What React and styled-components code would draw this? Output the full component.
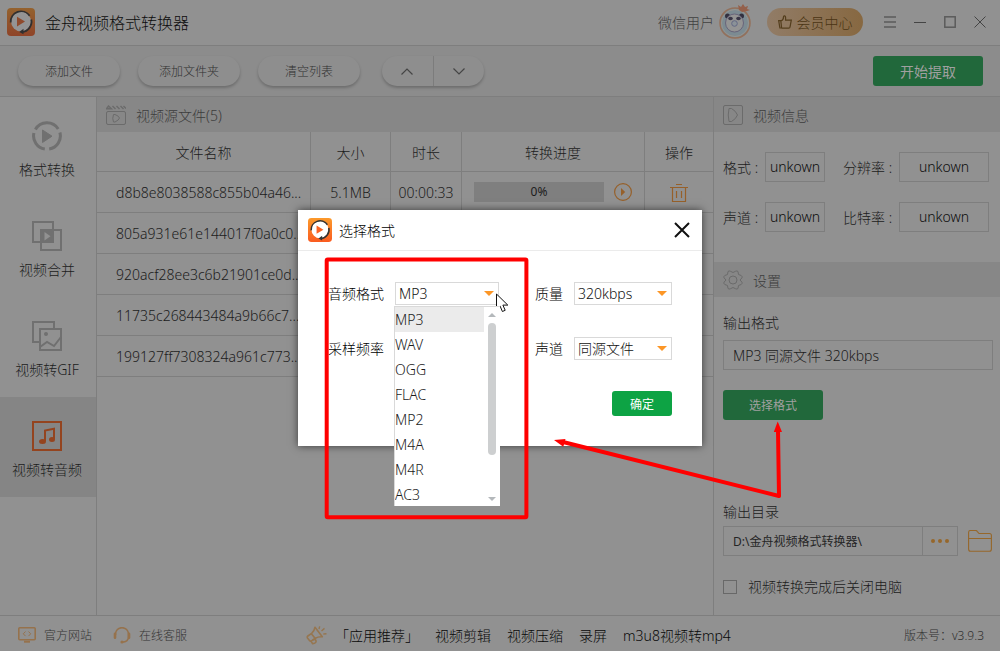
import React, { useState } from "react";
import styled, { createGlobalStyle } from "styled-components";

const GlobalStyle = createGlobalStyle`
  * {
    box-sizing: border-box;
  }

  body {
    margin: 0;
    background: #919191;
  }

  body, button, input, select {
    font-family: "Noto Sans", "Noto Sans CJK SC", sans-serif;
    font-size: 14px;
    font-weight: 300;
  }

  button {
    padding: 0;
    border: 0;
    background: none;
    color: inherit;
  }

  svg {
    display: block;
    flex: none;
  }
`;

const files = [
  { name: "d8b8e8038588c855b04a46...", size: "5.1MB", time: "00:00:33", progress: "0%" },
  { name: "805a931e61e144017f0a0c0..." },
  { name: "920acf28ee3c6b21901ce0d..." },
  { name: "11735c268443484a9b66c7..." },
  { name: "199127ff7308324a961c773..." },
];

const formats = ["MP3", "WAV", "OGG", "FLAC", "MP2", "M4A", "M4R", "AC3"];

const Logo = ({ size, dim }) => (
  <svg width={size} height={size} viewBox="0 0 28 28">
    <defs>
      <linearGradient id={dim ? "logoDim" : "logo"} x1="0" y1="0" x2="0" y2="1">
        <stop offset="0" stopColor={dim ? "#94622e" : "#fc9a2b"} />
        <stop offset="1" stopColor={dim ? "#8f4428" : "#fa5b20"} />
      </linearGradient>
    </defs>
    <rect width="28" height="28" rx="4" fill={`url(#${dim ? "logoDim" : "logo"})`} />
    <circle cx="14" cy="13.500" r="10" fill={dim ? "#949494" : "#fff"} />
    <path
      d="M3.700 14.500A10.400 10.400 0 0 1 22.600 7.800M24.300 11.500A10.400 10.400 0 0 1 15 24"
      fill="none"
      stroke={dim ? "#303030" : "#333"}
      strokeWidth="1.800"
    />
    <path d="M16.500 20.800v5.400l-4.300-2.300z" fill={dim ? "#303030" : "#333"} />
    <path d="M10 8.800v9.600l8-4.800z" fill={dim ? "#8f4a2c" : "#fb6322"} />
  </svg>
);

const Panda = () => (
  <svg width="34" height="36" viewBox="0 0 34 36">
    <circle cx="16" cy="19" r="15" fill="#7c8b92" stroke="#94705a" strokeWidth="1.500" />
    <circle cx="16" cy="19" r="13.500" fill="none" stroke="#96948f" />
    <circle cx="8.500" cy="12" r="2.500" fill="#32303f" />
    <circle cx="22.500" cy="12" r="2.500" fill="#32303f" />
    <circle cx="15.500" cy="19" r="9" fill="#949494" stroke="#68647a" />
    <ellipse cx="11.500" cy="14.500" rx="2.300" ry="1.800" fill="#393647" />
    <ellipse cx="19.500" cy="14.500" rx="2.300" ry="1.800" fill="#393647" />
    <circle cx="15.500" cy="19.500" r="2.800" fill="#8b9298" stroke="#636884" />
    <path d="M19 1l3 2 2-3 2 3 3-1-1 3 3 1-3 1-5 1-3-2z" fill="#94604b" />
  </svg>
);

const ThumbIcon = () => (
  <svg width="14" height="14" viewBox="0 0 14 14" fill="none" stroke="#543e1d" strokeWidth="1.200">
    <path d="M.7 5.700h2.100l.8 7.300H1.900zM3.300 5.700c1.600-.6 2.200-2 2.300-4.100.1-1.300 2-1 2 .8v2.800h5.700L12 12.200q-.2.900-1.200.9H3.600" />
  </svg>
);

const ConvertIcon = () => (
  <svg width="30" height="30" viewBox="0 0 30 30">
    <g fill="none" stroke="#707070" strokeWidth="3">
      <path d="M3.400 8.500A13.300 13.300 0 0 1 26.200 8" />
      <path d="M27.900 11.500A13.300 13.300 0 0 1 17.200 28.100" />
      <path d="M12.800 28.100A13.300 13.300 0 0 1 1.900 12" />
    </g>
    <path d="M10.500 9v12.500L20 15.200z" fill="#707070" stroke="#707070" strokeLinejoin="round" />
  </svg>
);

const MergeIcon = () => (
  <svg width="30" height="30" viewBox="0 0 30 30">
    <g fill="none" stroke="#707070" strokeWidth="2">
      <rect x="1" y="1" width="20" height="20" />
      <rect x="9" y="9" width="20" height="20" />
    </g>
    <rect x="9" y="9" width="12" height="12" fill="#707070" />
    <path d="M12.500 11v8.500l6-4.250z" fill="#919191" />
  </svg>
);

const GifIcon = () => (
  <svg width="30" height="30" viewBox="0 0 30 30" fill="none" stroke="#707070" strokeWidth="2">
    <path d="M7 21H1V1h21v6" />
    <rect x="8" y="8" width="21" height="21" />
    <circle cx="14" cy="13" r="2" fill="#707070" stroke="none" />
    <path d="M8 26l7-5 7 4 7-9" />
  </svg>
);

const MusicIcon = () => (
  <svg width="30" height="30" viewBox="0 0 30 30">
    <rect x="1" y="1" width="28" height="28" fill="none" stroke="#94441f" strokeWidth="2" />
    <path d="M13 20V9.500l9-1.700V18" fill="none" stroke="#94441f" strokeWidth="2" />
    <ellipse cx="10.500" cy="20.500" rx="3.500" ry="2.500" fill="#94441f" />
    <ellipse cx="20" cy="18.500" rx="3" ry="2.500" fill="#94441f" />
  </svg>
);

const ClapperIcon = () => (
  <svg width="20" height="20" viewBox="0 0 20 20" fill="none" stroke="#6b6b6b">
    <rect x=".5" y="6.500" width="19" height="13" rx="1.500" />
    <path d="M.5 3.800L2.500 1l3 2.800zM6.500 1l3 3M10.500 1l3 3M14.500 1l3 3M17.500 1l2.500 2.500" strokeWidth="1.400" />
    <path d="M7.500 9.500H9q4 1.500 4.500 3.500-.5 2-4.500 4H7.500q-1.500-3.500 0-7.500z" />
  </svg>
);

const InfoIcon = () => (
  <svg width="20" height="20" viewBox="0 0 20 20" fill="none" stroke="#6b6b6b">
    <rect x=".5" y=".5" width="19" height="19" rx="1.500" />
    <path d="M6 3.500h2.500Q13 6 14.500 10 13 14 8.500 16.500H6q-1.500-6.500 0-13z" />
  </svg>
);

const GearIcon = () => (
  <svg width="20" height="20" viewBox="0 0 20 20" fill="none" stroke="#6b6b6b">
    <circle cx="10" cy="10" r="4" />
    <path d="M7.500 1.300Q6 .5 5 1.500L4.500 4.500 1.800 5.500Q.5 6.500 1 7.800L3 10l-2 2.200q-.5 1.300.8 2.300l2.700 1 .5 3q1 1 2.500.2L10 17.500l2.500 1.200q1.500.8 2.500-.2l.5-3 2.700-1q1.300-1 .8-2.300L17 10l2-2.200q.5-1.300-.8-2.300l-2.700-1-.5-3q-1-1-2.500-.2L10 2.500z" />
  </svg>
);

const PlayIcon = () => (
  <svg width="18" height="18" viewBox="0 0 18 18">
    <circle cx="9" cy="9" r="8.400" fill="none" stroke="#96602a" strokeWidth="1.200" />
    <path d="M7 5v8l4.200-4z" fill="#96602a" />
  </svg>
);

const TrashIcon = () => (
  <svg width="18" height="18" viewBox="0 0 18 18" fill="none" stroke="#96602a">
    <path d="M6 .5h6M0 3.500h18M2.500 3.500v14h13v-14M6.500 7v7M11.500 7v7" strokeWidth="1.200" />
  </svg>
);

const FolderIcon = () => (
  <svg width="24" height="22" viewBox="0 0 24 22" fill="none" stroke="#96672b" strokeWidth="1.100">
    <path d="M.6 19V2.500q0-2 1.700-2h5.500q.8 0 1.400.8L11 3.500h10.500q1.900 0 1.900 2V19q0 2.300-2 2.300H2.600q-2 0-2-2.300zM.6 8.500h22.800" />
  </svg>
);

const SiteIcon = () => (
  <svg width="18" height="16" viewBox="0 0 18 16" fill="none" stroke="#96724c">
    <rect x=".8" y=".8" width="16.400" height="12" rx="1" strokeWidth="1.600" />
    <path d="M7.500 4.500L5.300 6.800l2.200 2.300M10.500 4.500l2.200 2.300-2.200 2.300" />
    <path d="M6 14.700h6" strokeWidth="2" />
  </svg>
);

const ServiceIcon = () => (
  <svg width="18" height="17" viewBox="0 0 18 17" fill="none" stroke="#96724c">
    <path d="M2.500 8V7a6.500 6.300 0 0 1 13 0v3c0 3.500-3 5-6.500 5.300" strokeWidth="1.600" />
    <path d="M2 6.800v4M16 6.800v4" strokeWidth="2.600" strokeLinecap="round" />
    <circle cx="9" cy="15" r="1.600" fill="#96724c" stroke="none" />
  </svg>
);

const HornIcon = () => (
  <svg
    width="21"
    height="19"
    viewBox="0 0 21 19"
    fill="none"
    stroke="#967650"
    strokeWidth="1.600"
    strokeLinejoin="round"
  >
    <path d="M9 1.200l7.300 9.600q-4-.3-7 1.400l-3.800 2.700q-1.200.7-2-.3l-2-2.600q-.7-1.200.4-2l3.700-2.700Q8.500 5 9 1.200z" />
    <path d="M5.200 7.600l4 5M6.500 14.500a1.900 1.900 0 1 1 2 2.700l-1.800.5-2-2.800" />
    <path d="M13 3l.7-2.600M15.500 5l3-2.600M17.300 8l3.200-.2" strokeWidth="1.400" />
  </svg>
);

const SelectBox = ({ id, label, value, options }) => (
  <Field>
    <label htmlFor={id}>{label}</label>
    <SelectWrap>
      <select id={id} defaultValue={value}>
        {(options || [value]).map((item) => (
          <option key={item}>{item}</option>
        ))}
      </select>
      <svg width="10" height="5" viewBox="0 0 10 5">
        <path d="M0 0h10L5 5z" fill="#fc9626" />
      </svg>
    </SelectWrap>
  </Field>
);

const App = () => {
  const [format, setFormat] = useState("MP3");

  return (
    <Page>
      <GlobalStyle />

      <TitleBar>
        <Logo size={28} dim />
        <Title>金舟视频格式转换器</Title>
        <User>微信用户</User>
        <Panda />
        <VipButton>
          <ThumbIcon />
          会员中心
        </VipButton>
        <WindowButton aria-label="menu">
          <svg width="12" height="12" viewBox="0 0 12 12" stroke="#5b5b5b" strokeWidth="1.500">
            <path d="M0 1h12M0 6h12M0 11h12" />
          </svg>
        </WindowButton>
        <WindowButton aria-label="minimize">
          <svg width="12" height="12" viewBox="0 0 12 12" stroke="#444">
            <path d="M0 6.500h12" />
          </svg>
        </WindowButton>
        <WindowButton aria-label="maximize">
          <svg width="12" height="12" viewBox="0 0 12 12" fill="none" stroke="#5b5b5b" strokeWidth="1.500">
            <rect x=".8" y=".8" width="10.400" height="10.400" />
          </svg>
        </WindowButton>
        <WindowButton aria-label="close">
          <svg width="12" height="12" viewBox="0 0 12 12" stroke="#444">
            <path d="M.5.5l11 11M11.500.5l-11 11" />
          </svg>
        </WindowButton>
      </TitleBar>

      <Toolbar>
        <Pill>添加文件</Pill>
        <Pill>添加文件夹</Pill>
        <Pill>清空列表</Pill>
        <PillGroup>
          <button aria-label="up">
            <svg width="12" height="7" viewBox="0 0 12 7" fill="none" stroke="#454545" strokeWidth="1.200">
              <path d="M.5 6.500L6 1l5.500 5.500" />
            </svg>
          </button>
          <button aria-label="down">
            <svg width="12" height="7" viewBox="0 0 12 7" fill="none" stroke="#454545" strokeWidth="1.200">
              <path d="M.5.500L6 6l5.500-5.500" />
            </svg>
          </button>
        </PillGroup>
        <StartButton>开始提取</StartButton>
      </Toolbar>

      <Body>
        <Sidebar>
          <SideItem>
            <ConvertIcon />
            格式转换
          </SideItem>
          <SideItem>
            <MergeIcon />
            视频合并
          </SideItem>
          <SideItem>
            <GifIcon />
            视频转GIF
          </SideItem>
          <SideItem $active>
            <MusicIcon />
            视频转音频
          </SideItem>
        </Sidebar>

        <Main>
          <Band>
            <ClapperIcon />
            视频源文件(5)
          </Band>
          <FileTable>
            <colgroup>
              <col />
              <col width="80" />
              <col width="71" />
              <col width="183" />
              <col width="68" />
            </colgroup>
            <thead>
              <tr>
                <th>文件名称</th>
                <th>大小</th>
                <th>时长</th>
                <th>转换进度</th>
                <th>操作</th>
              </tr>
            </thead>
            <tbody>
              {files.map((file) => (
                <tr key={file.name}>
                  <NameCell>{file.name}</NameCell>
                  <td>{file.size}</td>
                  <td>{file.time}</td>
                  <td>
                    {file.progress && (
                      <ProgressCell>
                        <Progress>{file.progress}</Progress>
                        <button aria-label="play">
                          <PlayIcon />
                        </button>
                      </ProgressCell>
                    )}
                  </td>
                  <td>
                    {file.progress && (
                      <DeleteButton aria-label="delete">
                        <TrashIcon />
                      </DeleteButton>
                    )}
                  </td>
                </tr>
              ))}
            </tbody>
          </FileTable>
        </Main>

        <Panel>
          <Band>
            <InfoIcon />
            视频信息
          </Band>
          <InfoGrid>
            <label htmlFor="format">格式 :</label>
            <input id="format" defaultValue="unkown" />
            <label htmlFor="resolution">分辨率 :</label>
            <input id="resolution" defaultValue="unkown" />
            <label htmlFor="channel">声道 :</label>
            <input id="channel" defaultValue="unkown" />
            <label htmlFor="bitrate">比特率 :</label>
            <input id="bitrate" defaultValue="unkown" />
          </InfoGrid>
          <Band>
            <GearIcon />
            设置
          </Band>
          <Settings>
            <label htmlFor="output">输出格式</label>
            <OutputInput id="output" defaultValue="MP3 同源文件 320kbps" />
            <ChooseButton>选择格式</ChooseButton>
            <label htmlFor="folder">输出目录</label>
            <PathRow>
              <PathInput id="folder" defaultValue="D:\金舟视频格式转换器\" />
              <MoreButton aria-label="browse">
                <svg width="18" height="4" viewBox="0 0 18 4" fill="#96672b">
                  <circle cx="2" cy="2" r="2" />
                  <circle cx="9" cy="2" r="2" />
                  <circle cx="16" cy="2" r="2" />
                </svg>
              </MoreButton>
              <button aria-label="open folder">
                <FolderIcon />
              </button>
            </PathRow>
            <CheckLabel>
              <input type="checkbox" />
              视频转换完成后关闭电脑
            </CheckLabel>
          </Settings>
        </Panel>
      </Body>

      <Footer>
        <FooterLink href="#site">
          <SiteIcon />
          官方网站
        </FooterLink>
        <FooterLink href="#service">
          <ServiceIcon />
          在线客服
        </FooterLink>
        <Recommend>
          <HornIcon />
          <span>「应用推荐」</span>
          <a href="#edit">视频剪辑</a>
          <a href="#compress">视频压缩</a>
          <a href="#record">录屏</a>
          <a href="#m3u8">m3u8视频转mp4</a>
        </Recommend>
        <Version>版本号：v3.9.3</Version>
      </Footer>

      <Overlay>
        <Modal role="dialog" aria-label="选择格式">
          <ModalHeader>
            <Logo size={24} />
            <h2>选择格式</h2>
            <button aria-label="close">
              <svg width="16" height="16" viewBox="0 0 16 16" stroke="#111" strokeWidth="2">
                <path d="M1 1l14 14M15 1L1 15" />
              </svg>
            </button>
          </ModalHeader>
          <FormGrid>
            <FormatField>
              <SelectBox key={format} id="audio" label="音频格式" value={format} options={formats} />
              <List role="listbox" aria-label="音频格式">
                <Options>
                  {formats.map((item) => (
                    <Option
                      key={item}
                      role="option"
                      aria-selected={item === format}
                      $active={item === format}
                      onClick={() => setFormat(item)}
                    >
                      {item}
                    </Option>
                  ))}
                </Options>
                <Scrollbar>
                  <svg width="8" height="4" viewBox="0 0 8 4">
                    <path d="M0 4h8L4 0z" fill="#b4b8bb" />
                  </svg>
                  <Thumb />
                  <svg width="8" height="4" viewBox="0 0 8 4">
                    <path d="M0 0h8L4 4z" fill="#b4b8bb" />
                  </svg>
                </Scrollbar>
              </List>
            </FormatField>
            <SelectBox id="quality" label="质量" value="320kbps" />
            <SelectBox id="rate" label="采样频率" value="" />
            <SelectBox id="audioChannel" label="声道" value="同源文件" />
          </FormGrid>
          <ConfirmButton>确定</ConfirmButton>
        </Modal>
      </Overlay>

      <Marks width="1000" height="651" viewBox="0 0 1000 651">
        <rect x="326.700" y="259.500" width="199.700" height="257.800" rx="1" fill="none" stroke="#f00" strokeWidth="4" />
        <path d="M563 442L779 496L778 430" fill="none" stroke="#f00" strokeWidth="4" strokeLinejoin="round" />
        <path d="M554 440l11.500-1-2.200 7.800z" fill="#f00" />
        <path d="M777.700 421.500l4.300 10.500h-8.200z" fill="#f00" />
        <path
          d="M496.500 294v15.500l3.600-3.400 2.300 5.400 2.800-1.200-2.300-5.200h4.900z"
          fill="#fff"
          stroke="#111"
        />
      </Marks>
    </Page>
  );
};

const Page = styled.div`
  display: flex;
  flex-direction: column;
  min-height: 100vh;
  color: #1c1c1c;
  background: #919191;
`;

const TitleBar = styled.header`
  display: flex;
  align-items: center;
  height: 46px;
  padding: 0 5px 2px 7px;
  border-bottom: 1px solid #7e7e7e;
`;

const Title = styled.h1`
  flex: 1;
  margin: 0 0 0 10px;
  font-size: 16px;
  font-weight: 300;
  color: #0c0c0c;
`;

const User = styled.span`
  margin-right: 5px;
  color: #404040;
`;

const VipButton = styled.button`
  display: flex;
  align-items: center;
  justify-content: center;
  gap: 5px;
  width: 96px;
  height: 28px;
  margin: 0 12px 0 14px;
  border-radius: 14px;
  color: #4a3413;
  background: linear-gradient(90deg, #917c67, #876841);
`;

const WindowButton = styled.button`
  display: flex;
  align-items: center;
  justify-content: center;
  width: 30px;
  height: 30px;
`;

const Toolbar = styled.div`
  display: flex;
  align-items: center;
  gap: 18px;
  height: 51px;
  padding: 0 17px 0 18px;
  border-bottom: 1px solid #7e7e7e;
  background: #8c8c8c;
`;

const Pill = styled.button`
  width: 102px;
  height: 30px;
  border-radius: 15px;
  font-size: 12px;
  color: #303030;
  background: #8e8e8e;
  box-shadow: 0 2px 3px rgba(0, 0, 0, 0.22);
`;

const PillGroup = styled.div`
  display: flex;
  width: 102px;
  height: 30px;
  margin-left: 4px;
  border-radius: 15px;
  background: #8e8e8e;
  box-shadow: 0 2px 3px rgba(0, 0, 0, 0.22);

  button {
    display: flex;
    flex: 1;
    align-items: center;
    justify-content: center;
  }

  button + button {
    border-left: 1px solid #7c7c7c;
  }
`;

const StartButton = styled.button`
  width: 110px;
  height: 30px;
  margin-left: auto;
  border-radius: 3px;
  font-weight: 400;
  color: #a0a0a0;
  background: #21683b;
`;

const Body = styled.div`
  display: flex;
  flex: 1;
`;

const Sidebar = styled.nav`
  width: 97px;
  border-right: 1px solid #7e7e7e;
`;

const SideItem = styled.button`
  display: flex;
  flex-direction: column;
  align-items: center;
  gap: 8px;
  width: 100%;
  height: 100px;
  padding: 24px 2px 0 0;
  background: ${({ $active }) => ($active ? "#858585" : "transparent")};
`;

const Main = styled.main`
  flex: 1;
  min-width: 0;
`;

const Band = styled.div`
  display: flex;
  align-items: center;
  gap: 10px;
  height: 35px;
  padding: 0 9px;
  color: #3c3c3c;
  background: #878787;
`;

const FileTable = styled.table`
  width: 100%;
  table-layout: fixed;
  border-spacing: 0;

  th,
  td {
    height: 41px;
    padding: 0;
    border-right: 1px solid #7e7e7e;
    border-bottom: 1px solid #7e7e7e;
    font-weight: 300;
    text-align: center;
  }

  th {
    height: 40px;
  }

  th:last-child,
  td:last-child {
    border-right: 0;
  }
`;

const NameCell = styled.td`
  && {
    padding-left: 19px;
    overflow: hidden;
    text-align: left;
    white-space: nowrap;
  }
`;

const ProgressCell = styled.div`
  display: flex;
  align-items: center;
  gap: 10px;
  padding: 0 12px;
`;

const Progress = styled.div`
  flex: 1;
  height: 20px;
  font-size: 12px;
  font-weight: 400;
  line-height: 20px;
  background: #7f7f7f;
`;

const DeleteButton = styled.button`
  display: inline-block;
  vertical-align: middle;
`;

const Panel = styled.aside`
  width: 287px;
  border-left: 1px solid #7e7e7e;
`;

const InfoGrid = styled.div`
  display: grid;
  grid-template-columns: 42px 60px 56px 90px;
  grid-auto-rows: 30px;
  row-gap: 20px;
  align-items: center;
  padding: 20px 9px 30px;

  label:nth-of-type(even) {
    margin-left: 18px;
    white-space: nowrap;
  }

  input {
    width: 100%;
    height: 30px;
    padding: 0 0 2px;
    border: 1px solid #7e7e7e;
    border-radius: 0;
    color: #0c0c0c;
    background: transparent;
    text-align: center;
  }

  label:nth-of-type(even) + input {
    width: 90px;
    margin-left: 18px;
  }
`;

const Settings = styled.div`
  display: flex;
  flex-direction: column;
  align-items: flex-start;
  padding: 16px 7px 0 9px;

  > label {
    line-height: 20px;
  }
`;

const OutputInput = styled.input`
  width: 100%;
  height: 30px;
  margin-top: 7px;
  padding: 0 9px;
  border: 1px solid #7e7e7e;
  color: #1c1c1c;
  background: transparent;
`;

const ChooseButton = styled.button`
  width: 100px;
  height: 30px;
  margin: 20px 0 82px;
  border-radius: 3px;
  font-size: 12px;
  font-weight: 400;
  color: #a0a0a0;
  background: #21683b;
`;

const PathRow = styled.div`
  display: flex;
  align-items: center;
  width: 100%;
  margin: 4px 0 21px;
  padding-right: 1px;
`;

const PathInput = styled.input`
  flex: 1;
  min-width: 0;
  height: 30px;
  padding: 0 9px;
  border: 1px solid #7e7e7e;
  font-size: 12px;
  font-weight: 400;
  color: #252525;
  background: transparent;
`;

const MoreButton = styled.button`
  display: flex;
  align-items: center;
  justify-content: center;
  width: 35px;
  height: 30px;
  margin-right: 10px;
  border: 1px solid #7e7e7e;
  border-left: 0;
`;

const CheckLabel = styled.label`
  display: flex;
  align-items: center;
  gap: 11px;

  input {
    width: 14px;
    height: 14px;
    margin: 0;
    border: 1px solid #686868;
    appearance: none;
  }
`;

const Footer = styled.footer`
  display: flex;
  align-items: center;
  height: 36px;
  padding: 3px 16px 0 18px;
  border-top: 1px solid #7e7e7e;

  a {
    color: inherit;
    text-decoration: none;
  }
`;

const FooterLink = styled.a`
  display: flex;
  align-items: center;
  gap: 8px;
  margin-right: 21px;
  font-size: 12px;

  && {
    color: #343434;
  }
`;

const Recommend = styled.div`
  display: flex;
  align-items: center;
  gap: 16px;
  margin-left: 98px;
  color: #080808;

  span {
    margin-left: -8px;
  }
`;

const Version = styled.span`
  margin-left: auto;
  font-size: 12px;
  color: #303030;
`;

const Overlay = styled.div`
  position: absolute;
  inset: 0;
  display: flex;
  align-items: flex-start;
  justify-content: center;
  padding-top: 210px;
`;

const Modal = styled.div`
  display: flex;
  flex-direction: column;
  width: 404px;
  padding-bottom: 30px;
  color: #000;
  background: #fff;
  box-shadow: 0 0 8px rgba(0, 0, 0, 0.6);
`;

const ModalHeader = styled.div`
  display: flex;
  align-items: center;
  height: 41px;
  padding: 0 12px 0 10px;
  border-bottom: 1px solid #ebebeb;

  h2 {
    flex: 1;
    margin: 0 0 0 7px;
    font-size: 14px;
    font-weight: 300;
  }
`;

const FormGrid = styled.div`
  display: grid;
  grid-template-columns: 171px 137px;
  column-gap: 36px;
  row-gap: 32px;
  padding: 31px 30px 31px;
`;

const Field = styled.div`
  display: flex;
  align-items: center;
  gap: 11px;
  height: 23px;

  label {
    line-height: 20px;
  }
`;

const SelectWrap = styled.div`
  position: relative;
  flex: 1;
  height: 23px;

  select {
    width: 100%;
    height: 23px;
    padding: 0 3px;
    border: 1px solid #d9d9d9;
    border-radius: 0;
    color: #111;
    background: #fff;
    appearance: none;
  }

  svg {
    position: absolute;
    top: 9px;
    right: 5px;
    pointer-events: none;
  }
`;

const FormatField = styled.div`
  position: relative;
`;

const List = styled.div`
  position: absolute;
  top: 24px;
  right: -1px;
  z-index: 1;
  display: flex;
  width: 106px;
  height: 200px;
  border-top: 1px solid #d9d9d9;
  border-left: 1px solid #d9d9d9;
  background: #fff;
`;

const Options = styled.ul`
  flex: 1;
  margin: 0;
  padding: 0;
  overflow: hidden;
  list-style: none;
`;

const Option = styled.li`
  height: 25px;
  line-height: 25px;
  color: #1c1c1c;
  background: ${({ $active }) => ($active ? "#ebebeb" : "transparent")};
`;

const Scrollbar = styled.div`
  display: flex;
  flex-direction: column;
  align-items: center;
  width: 16px;
  padding: 6px 0 5px;

  svg:last-child {
    margin-top: auto;
  }
`;

const Thumb = styled.div`
  width: 8px;
  height: 132px;
  margin-top: 6px;
  border-radius: 4px;
  background: #cdcfd0;
`;

const ConfirmButton = styled.button`
  align-self: flex-end;
  width: 60px;
  height: 25px;
  margin-right: 30px;
  border-radius: 3px;
  font-size: 12px;
  font-weight: 400;
  color: #fff;
  background: #0da344;
`;

const Marks = styled.svg`
  position: absolute;
  top: 0;
  left: 50%;
  margin-left: -500px;
  pointer-events: none;
`;

export default App;
